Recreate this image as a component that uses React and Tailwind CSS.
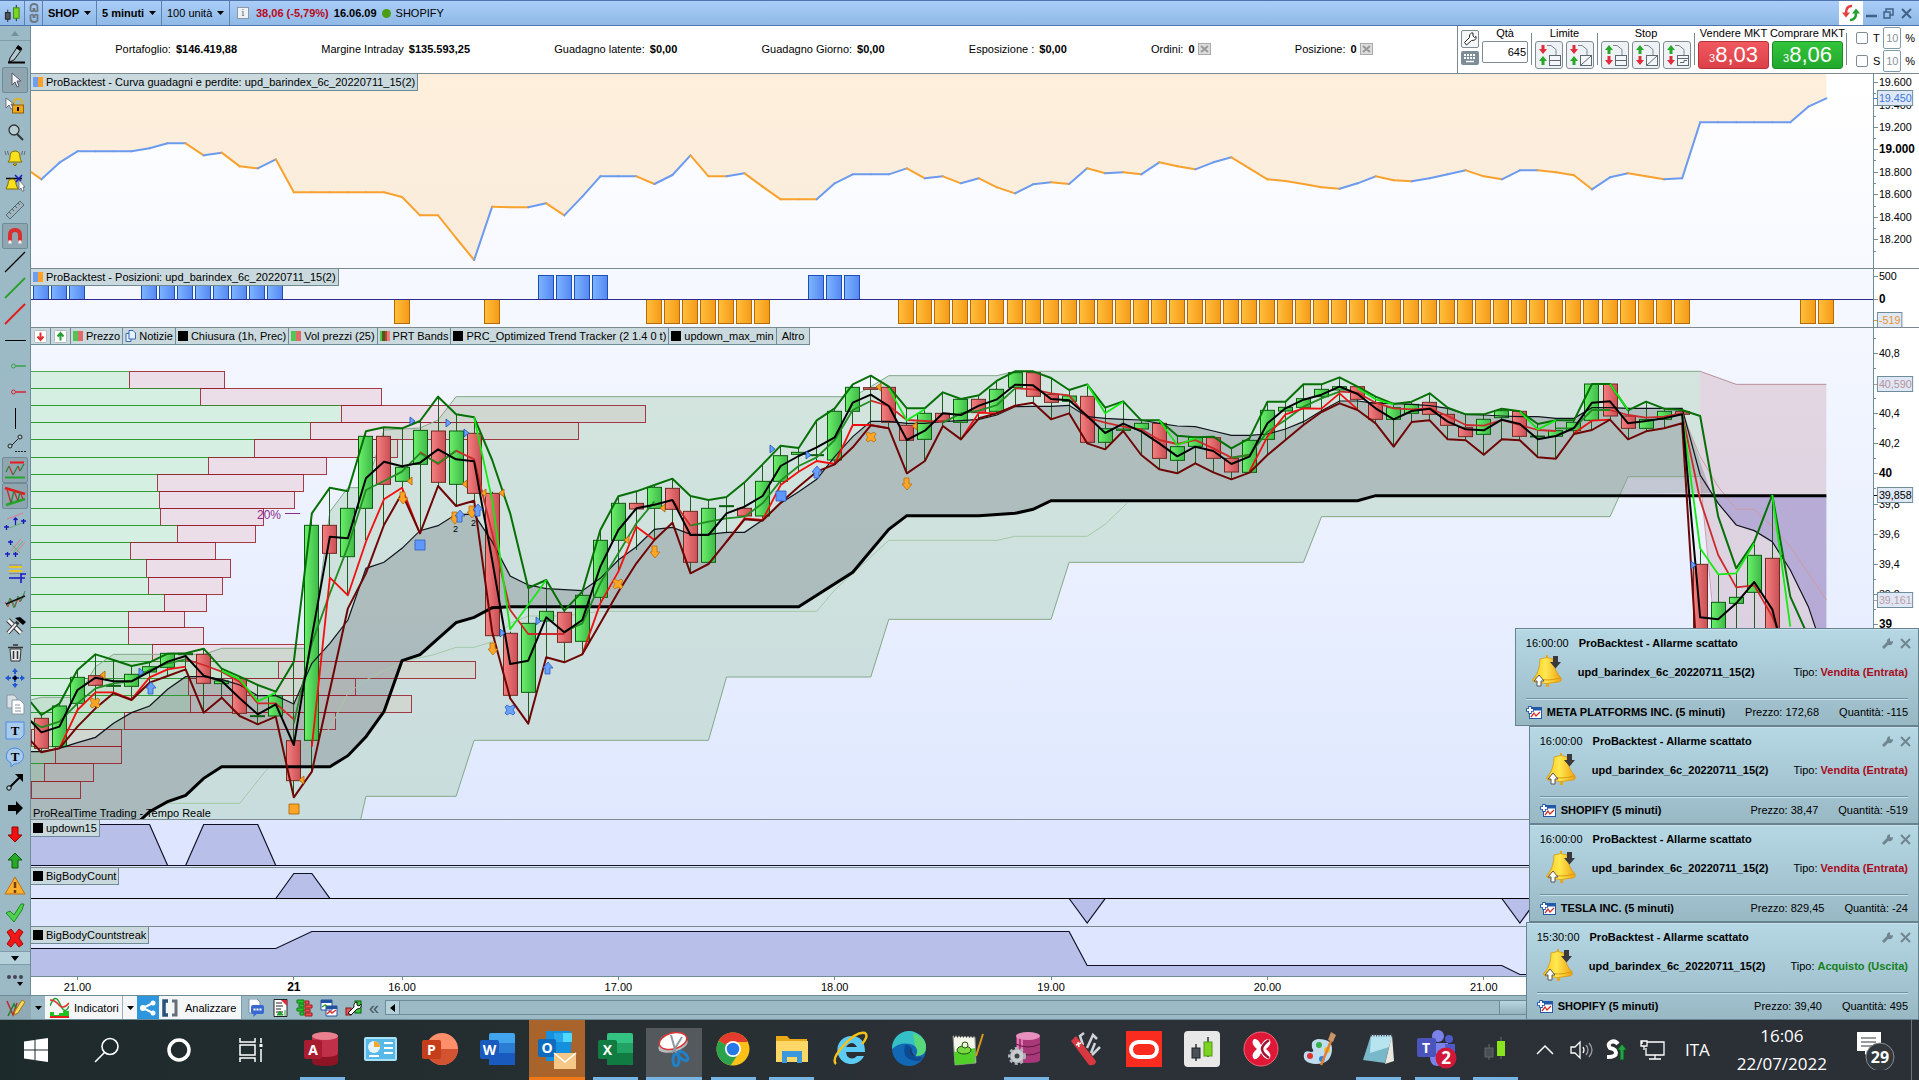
import React from 'react';

// Horizontal position of bar i, and vertical position of a price level
const bx = (i) => 41.4 + 18.03 * i;
const ly = (v) => 360 + v / 3;
const run = (start, values) => values.map((v, k) => `${bx(start + k)},${ly(v)}`).join(' ');
const pts = (pairs) => pairs.map(([i, v]) => `${bx(i)},${ly(v)}`).join(' ');

const EQUITY = [
    500, 538, 488, 454, 454, 454, 454, 445, 430, 430, 466, 458, 499, 505, 478, 577, 577, 577, 577, 577, 577, 591, 646, 646, 714,
    780, 620, 622, 622, 610, 646, 590, 529, 529, 529, 552, 525, 466, 529, 529, 520, 560, 598, 598, 598, 550, 523, 523, 523, 505,
    535, 529, 550, 535, 562, 580, 553, 547, 552, 505, 520, 517, 523, 487, 499, 508, 487, 472, 505, 538, 543, 552, 562, 566, 550,
    529, 541, 544, 535, 523, 511, 529, 538, 511, 511, 517, 526, 568, 532, 520, 529, 538, 535, 367, 367, 367, 367, 367, 367, 320, 295,
];

const LONG_BARS = [0, 1, 2, 6, 7, 8, 9, 10, 11, 12, 13, 28, 29, 30, 31, 43, 44, 45];
const SHORT_BARS = [20, 25, 34, 35, 36, 37, 38, 39, 40, ...Array.from({ length: 44 }, (_, k) => 48 + k), 98, 99];

// top, green end, red end
const PROFILE = [
    [34, 129, 224], [85, 200, 381], [136, 341, 645], [187, 310, 578], [238, 254, 397], [290, 208, 326], [341, 157, 303],
    [392, 159, 294], [443, 160, 263], [494, 177, 255], [545, 130, 215], [598, 146, 230], [650, 148, 222], [701, 164, 206],
    [752, 128, 184], [802, 128, 203], [853, 152, 309], [904, 278, 475], [955, 188, 355], [1006, 190, 411], [1057, 124, 335],
    [1108, 31, 121], [1159, 55, 121], [1210, 44, 93], [1264, 31, 80], [1315, 0, 0],
];

// index, body top, body bottom, high, low, rising
const CANDLES = [
    [0, 1075, 1165, 1065, 1177, 0], [1, 1038, 1160, 1031, 1165, 1], [2, 952, 1030, 930, 1050, 1], [3, 947, 976, 883, 1045, 0],
    [4, 976, 979, 900, 1000, 1], [5, 943, 979, 918, 1020, 1], [6, 920, 936, 907, 968, 1], [7, 880, 922, 880, 948, 1],
    [8, 880, 884, 880, 928, 1], [9, 883, 970, 866, 1058, 0], [10, 963, 971, 926, 1013, 1], [11, 955, 1060, 950, 1068, 0],
    [12, 1067, 1070, 975, 1093, 1], [13, 1007, 1068, 995, 1070, 1], [14, 1142, 1262, 905, 1312, 0], [15, 496, 1141, 460, 1235, 1],
    [16, 496, 580, 383, 653, 0], [17, 445, 590, 394, 706, 1], [18, 229, 445, 214, 540, 1], [19, 229, 373, 202, 495, 0],
    [20, 322, 364, 205, 400, 1], [21, 211, 313, 183, 520, 1], [22, 213, 367, 110, 378, 0], [23, 213, 373, 163, 438, 1],
    [24, 220, 400, 172, 422, 0], [25, 400, 827, 395, 830, 0], [26, 820, 1006, 815, 1015, 0], [27, 790, 997, 684, 1091, 1],
    [28, 754, 783, 660, 892, 1], [29, 757, 847, 752, 907, 0], [30, 706, 844, 695, 883, 1], [31, 541, 712, 510, 730, 1],
    [32, 430, 541, 409, 635, 1], [33, 430, 447, 394, 570, 0], [34, 382, 445, 375, 540, 1], [35, 385, 448, 356, 488, 0],
    [36, 454, 607, 408, 640, 0], [37, 445, 607, 420, 612, 1], [38, 437, 440, 411, 520, 1], [39, 445, 468, 367, 478, 0],
    [40, 364, 468, 313, 480, 1], [41, 287, 364, 257, 375, 1], [42, 277, 283, 264, 336, 1], [43, 284, 287, 181, 303, 1],
    [44, 154, 300, 145, 313, 1], [45, 82, 154, 73, 195, 1], [46, 83, 88, 47, 196, 0], [47, 82, 187, 80, 205, 0],
    [48, 196, 241, 145, 340, 0], [49, 160, 238, 145, 303, 1], [50, 160, 183, 97, 198, 0], [51, 118, 187, 117, 238, 1],
    [52, 118, 158, 106, 175, 0], [53, 88, 154, 62, 160, 1], [54, 38, 82, 34, 137, 1], [55, 38, 109, 34, 128, 0],
    [56, 103, 127, 54, 178, 0], [57, 108, 124, 90, 160, 1], [58, 109, 247, 73, 250, 0], [59, 206, 247, 143, 268, 1],
    [60, 207, 211, 124, 213, 1], [61, 190, 207, 181, 285, 1], [62, 190, 295, 181, 328, 0], [63, 260, 301, 227, 340, 1],
    [64, 232, 259, 230, 310, 1], [65, 233, 295, 230, 337, 0], [66, 295, 336, 265, 358, 0], [67, 241, 337, 235, 338, 1],
    [68, 151, 238, 125, 285, 1], [69, 142, 153, 125, 240, 1], [70, 116, 142, 73, 195, 1], [71, 88, 110, 73, 156, 1],
    [72, 80, 90, 52, 130, 1], [73, 80, 118, 78, 150, 0], [74, 128, 178, 110, 190, 0], [75, 143, 178, 132, 260, 1],
    [76, 133, 160, 125, 186, 1], [77, 127, 163, 100, 181, 0], [78, 163, 196, 143, 238, 0], [79, 202, 230, 163, 241, 0],
    [80, 178, 223, 163, 284, 1], [81, 152, 173, 146, 238, 1], [82, 154, 229, 154, 241, 0], [83, 228, 231, 192, 292, 1],
    [84, 212, 229, 181, 296, 1], [85, 187, 212, 181, 222, 1], [86, 72, 181, 72, 210, 1], [87, 72, 168, 72, 179, 0],
    [88, 168, 205, 151, 238, 0], [89, 178, 205, 125, 214, 1], [90, 154, 178, 146, 205, 1], [91, 155, 163, 150, 190, 0],
    [92, 613, 1300, 565, 1300, 0], [93, 727, 1300, 643, 1300, 1], [94, 712, 730, 640, 1300, 1], [95, 586, 697, 545, 1300, 1],
    [96, 595, 1300, 405, 1300, 0],
];

const HIGH_LINE = [
    1000, 1065, 1031, 930, 883, 900, 918, 907, 881, 880, 866, 926, 950, 975, 995, 905, 460, 383, 394, 214, 202, 205, 183, 110, 163,
    172, 300, 460, 684, 660, 752, 695, 510, 409, 394, 375, 356, 408, 420, 411, 367, 313, 257, 264, 181, 145, 73, 47, 80, 145, 145,
    97, 117, 106, 62, 34, 34, 54, 90, 73, 143, 124, 181, 181, 227, 232, 230, 265, 235, 125, 125, 73, 73, 52, 80, 110, 132, 125, 100,
    143, 163, 163, 146, 154, 192, 181, 181, 72, 72, 151, 125, 146, 150, 168, 470, 625, 545, 405, 710, 830,
];
const MID_LINE = [
    1060, 1117, 1100, 990, 953, 964, 964, 935, 905, 888, 947, 963, 1015, 1063, 1033, 1155, 830, 530, 535, 355, 305, 319, 308, 268,
    298, 304, 600, 912, 902, 772, 817, 780, 620, 510, 445, 434, 420, 525, 525, 460, 440, 408, 318, 288, 262, 232, 128, 104, 138, 240,
    212, 160, 165, 137, 118, 74, 76, 117, 121, 168, 219, 191, 214, 250, 289, 260, 273, 312, 290, 190, 145, 119, 104, 80, 102, 145,
    178, 153, 146, 185, 208, 211, 179, 192, 238, 228, 204, 128, 124, 190, 183, 175, 163, 772, 778, 730, 666, 748, 960,
];
const LOW_LINE = [
    1118, 1177, 1165, 1100, 1045, 1000, 1020, 968, 948, 928, 1058, 1013, 1068, 1093, 1070, 1312, 1235, 990, 745, 640, 495, 400, 520,
    378, 438, 422, 815, 1015, 1091, 892, 907, 883, 790, 695, 610, 540, 488, 640, 612, 545, 478, 482, 428, 380, 335, 313, 262, 196,
    205, 340, 303, 198, 238, 175, 160, 137, 128, 178, 160, 250, 268, 213, 285, 328, 340, 310, 337, 358, 338, 285, 240, 195, 156, 130,
    150, 190, 260, 186, 181, 238, 241, 284, 238, 241, 292, 296, 222, 210, 179, 238, 214, 205, 190, 1050,
];
const RED_RUNS = [
    [1, [1165, 1050, 997, 997, 1018, 952, 928, 920]], [15, [1160, 653, 706, 545, 418, 383, 522]], [30, [883, 730, 635, 500, 540]],
    [38, [545, 475, 480, 375, 335, 303, 312, 195, 195, 205]], [51, [238, 158, 160, 138]], [67, [335, 230, 163, 145, 146, 100, 148]],
    [85, [220, 182, 179]],
];
const CRIMSON_RUNS = [
    [8, [898, 915, 935, 965, 1030, 1030, 1078]], [21, [276, 312, 272, 298, 520, 750, 822, 822, 822]],
    [35, [420, 497]], [46, [122, 138, 180, 183, 185]], [54, [85, 88, 100, 106, 173, 188, 200, 208, 240, 252, 240, 265, 293, 285]],
    [72, [95, 98, 128, 145, 148, 145, 168, 195, 197, 180, 195, 210, 213]], [87, [150, 165, 173, 170, 160, 420, 585, 682, 676, 770, 900]],
];
const GREEN_RUNS = [
    [-1, [1070, 1102, 1085, 1030, 985, 970, 964, 930, 910, 898]], [14, [1090, 850, 700, 560, 390, 363, 335, 280, 310, 272]],
    [29, [815, 790, 670, 580, 490, 425]], [36, [497, 485, 475, 470, 430, 362, 318, 292, 240, 150, 123]], [50, [188, 160, 152, 135, 85]],
    [66, [293, 285, 215, 180, 140, 115, 95]], [84, [205, 205, 150, 150]],
];
const LIME_RUNS = [
    [10, [932, 958, 1024, 998]], [24, [172, 420, 808, 735, 660]], [47, [85, 181, 148]], [58, [73, 160, 125]], [62, [181, 255, 235]],
    [73, [85, 118, 133]], [82, [155, 208, 181]], [87, [72, 150]], [91, [160, 565, 643, 640, 550]], [96, [405, 800]],
];
const AVERAGE = [
    1175, 1175, 1165, 1148, 1132, 1090, 1058, 1038, 988, 950, 950, 958, 975, 1007, 1007, 1032, 910, 850, 780, 625, 607, 565, 512, 497,
    463, 463, 545, 648, 675, 686, 689, 692, 655, 600, 560, 508, 502, 523, 523, 517, 517, 480, 430, 395, 358, 290, 230, 184, 184, 190,
    190, 185, 182, 178, 165, 140, 139, 139, 136, 170, 175, 178, 180, 190, 198, 200, 213, 226, 226, 222, 207, 185, 152, 123, 123, 130,
    130, 133, 137, 145, 163, 165, 168, 170, 170, 175, 175, 143, 143, 145, 145, 145, 145, 345, 430, 495, 512, 545, 630, 740, 900,
];
const TREND = [
    [-1, 1620], [5.5, 1380], [6, 1355], [7, 1325], [8, 1306], [9, 1255], [10, 1220], [16, 1220], [17, 1187], [18, 1130], [19, 1055],
    [20, 902], [21, 884], [22, 836], [23, 788], [24, 772], [25, 743], [26, 740], [42, 740], [45, 637], [46, 572], [47, 508], [48, 467],
    [52, 467], [54, 460], [55, 448], [56, 422], [73, 422], [74, 407], [99, 407],
];
const UPPER = [
    [-1, 1025], [0, 1012], [2, 1012], [3, 920], [4, 883], [9, 883], [10, 865], [15, 865], [16, 455], [17, 383], [18, 383], [19, 210],
    [21, 204], [22, 180], [23, 110], [45, 110], [46, 80], [47, 47], [53, 47], [54, 34], [92, 34],
];
const LOWER = [
    [17.7, 1380], [18, 1309], [23, 1309], [24, 1141], [37, 1141], [38, 951], [46, 951], [47, 778], [56, 778], [57, 607], [70, 607],
    [71, 470], [87, 470], [88, 350], [92, 350],
];
const INNER = [
    [7, 1330], [11, 1330], [12.6, 1222], [13.6, 1180], [14.7, 1160], [16, 1105], [17, 1000], [18, 960], [20, 905], [21.7, 885],
    [23, 862], [24, 862], [25, 845], [26, 790], [27, 768], [29, 768], [31, 754], [43, 754], [44, 690], [47, 541], [53, 541], [54, 529],
    [58, 529], [59, 493], [60.2, 430],
];

const MARKERS = [
    ['play', 412, 421], ['play', 448, 423], ['play', 466, 433], ['play', 141, 672], ['play', 538, 621], ['play', 502, 633],
    ['play', 772, 449], ['play', 808, 455], ['play', 1693, 565], ['back', 410, 481], ['back', 465, 484], ['back', 484, 493],
    ['back', 502, 493], ['back', 103, 675], ['back', 302, 780], ['back', 627, 540], ['back', 663, 508], ['back', 879, 387],
    ['back', 915, 426], ['down', 402, 498], ['down', 454, 518], ['down', 471, 512], ['down', 492, 649], ['down', 654, 552],
    ['down', 906, 484], ['up', 150, 688], ['up', 459, 516], ['up', 477, 510], ['up', 547, 668], ['up', 816, 472],
    ['cross', 95, 703], ['cross', 618, 584], ['cross', 871, 437], ['crossBlue', 510, 710], ['box', 420, 545], ['box', 781, 496],
    ['boxOrange', 294, 809],
];
const MARKER_SHAPES = {
    play: ['M-2 -4 L3 0 L-2 4z', '#6aa0ff', '#1c50b0'],
    back: ['M2 -4 L-3 0 L2 4z', '#ffa526', '#a86008'],
    down: ['M-2 -6h5v6h3l-5 6 -5 -6h2z', '#ffa526', '#b87010'],
    up: ['M-2 6h5v-6h3l-5 -6 -5 6h2z', '#6aa0ff', '#2a5cc0'],
    cross: ['M-5 -3l2 -2 3 2 3 -2 2 2 -2 3 2 3 -2 2 -3 -2 -3 2 -2 -2 2 -3z', '#ffa526', '#b87010'],
    crossBlue: ['M-5 -3l2 -2 3 2 3 -2 2 2 -2 3 2 3 -2 2 -3 -2 -3 2 -2 -2 2 -3z', '#6aa0ff', '#2a5cc0'],
    box: ['M-5 -5h10v10h-10z', '#5e98ff', '#2a5cc0'],
    boxOrange: ['M-5 -5h10v10h-10z', '#ffa526', '#a86008'],
};

/* ---------- charts ---------- */

const Chart = ({ top, height, children }) => (
    <svg viewBox={`31 ${top} 1842 ${height}`} preserveAspectRatio="none" className="block h-full min-w-0 flex-1">{children}</svg>
);

// label: [text, y, bold]; badge: [text, y, colour, width]
const Axis = ({ top, height, labels = [], badges = [], ticks = [] }) => (
    <svg viewBox={`0 ${top} 46 ${height}`} preserveAspectRatio="none" className="block h-full w-[46px] shrink-0 border-l border-[#6f8b98] bg-white" fontFamily="Liberation Sans, Arial, sans-serif">
        {ticks.map((y) => <path key={y} d={`M0 ${y + 0.5}h2`} stroke="#6f8b98" />)}
        {labels.map(([text, y, bold]) => (
            <g key={text}>
                <path d={`M0 ${y + 0.5}h4`} stroke="#6f8b98" />
                <text x="5" y={y + 4} fontSize={bold ? 12 : 11} fontWeight={bold ? 700 : 400}>{text}</text>
            </g>
        ))}
        {badges.map(([text, y, color, width]) => (
            <g key={text}>
                <path d={`M0 ${y + 0.5}h4`} stroke={color} />
                <rect x="3.5" y={y - 7.5} width={width} height="15" fill="#dfe8f6" stroke="#6f8b98" />
                <text x="5" y={y + 4} fontSize="11" fill={color}>{text}</text>
            </g>
        ))}
    </svg>
);

const Swatch = ({ kind }) => {
    if (kind === 'equity') return <span className="flex h-[10px] w-[10px]"><i className="flex-1 bg-[#6f9df0]" /><i className="flex-1 bg-[#ffa126]" /></span>;
    if (kind === 'price') return <span className="flex h-[10px] w-[10px]"><i className="flex-1 bg-[#55c455]" /><i className="flex-1 bg-[#e06a6a]" /></span>;
    if (kind === 'bands') return <span className="flex h-[10px] w-[10px]"><i className="flex-1 bg-[#55c455]" /><i className="flex-1 bg-[#4c5a18]" /><i className="flex-1 bg-[#b0442c]" /><i className="flex-1 bg-[#e08080]" /></span>;
    return <span className="h-[10px] w-[10px] bg-black" />;
};

const Chip = ({ kind, children }) => (
    <button type="button" className="flex h-[17px] items-center gap-[3px] border-r border-b border-[#6f8b98] bg-[#cad9dd] px-[2px] whitespace-nowrap">
        {kind && <Swatch kind={kind} />}
        {children}
    </button>
);

const EquityPane = () => {
    const y = (v) => v / 3;
    let last = '#ffa12e';
    const segments = EQUITY.slice(1).map((v, k) => {
        if (v < EQUITY[k]) last = '#6c9bee';
        if (v > EQUITY[k]) last = '#f7a22f';
        return <path key={k} d={`M${bx(k - 1)} ${y(EQUITY[k])}L${bx(k)} ${y(v)}`} stroke={last} strokeWidth="2" strokeLinecap="round" />;
    });
    return (
        <section className="relative flex h-[195px] shrink-0 border-t border-[#7b8a90] bg-gradient-to-b from-white to-[#f7f9ff]">
            <Chart top={74} height={194}>
                <defs><linearGradient id="cream" x1="0" y1="0" x2="0" y2="1"><stop offset="0" stopColor="#ffefdc" /><stop offset="1" stopColor="#f8ecdc" /></linearGradient></defs>
                <polygon points={`23,70 ${EQUITY.map((v, k) => `${bx(k - 1)},${y(v)}`).join(' ')} ${bx(99)},70`} fill="url(#cream)" />
                {segments}
            </Chart>
            <Axis
                top={74} height={194} ticks={[93, 116, 138, 160, 183, 206, 228, 251]}
                labels={[['19.600', 82], ['19.400', 105], ['19.200', 127], ['19.000', 149, true], ['18.800', 172], ['18.600', 194], ['18.400', 217], ['18.200', 239]]}
                badges={[['19.450', 98, '#3d78d8', 36]]}
            />
            <div className="absolute top-0 left-0"><Chip kind="equity">ProBacktest - Curva guadagni e perdite: upd_barindex_6c_20220711_15(2)</Chip></div>
        </section>
    );
};

const PositionsPane = () => (
    <section className="relative flex h-[59px] shrink-0 border-t border-[#7b8a90] bg-[#f5f8ff]">
        <Chart top={269} height={58}>
            <defs>
                <linearGradient id="long"><stop offset="0" stopColor="#7db5ff" /><stop offset="1" stopColor="#5588f2" /></linearGradient>
                <linearGradient id="short"><stop offset="0" stopColor="#ffc03c" /><stop offset="1" stopColor="#f59a18" /></linearGradient>
            </defs>
            {LONG_BARS.map((i) => <rect key={i} x={Math.floor(bx(i)) - 7.5} y="275.5" width="15" height="24" fill="url(#long)" stroke="#1d4fb4" />)}
            {SHORT_BARS.map((i) => <rect key={i} x={Math.floor(bx(i)) - 7.5} y="299.5" width="15" height="24" fill="url(#short)" stroke="#b56a08" />)}
            <path d="M31 299.5H1873" stroke="#2a2a90" />
        </Chart>
        <Axis top={269} height={58} labels={[['500', 276], ['0', 299, true]]} badges={[['-519', 320, '#e8942a', 25]]} />
        <div className="absolute top-0 left-0"><Chip kind="equity">ProBacktest - Posizioni: upd_barindex_6c_20220711_15(2)</Chip></div>
    </section>
);

const Runs = ({ runs, color, width }) => runs.map(([start, values]) => (
    <polyline key={start} points={run(start, values)} fill="none" stroke={color} strokeWidth={width} strokeLinejoin="round" />
));

const profileRows = PROFILE.slice(0, -1).map(([top, green, red], k) => {
    const y = Math.round(ly(top)) + 0.5;
    return { y, green, red, h: Math.round(ly(PROFILE[k + 1][0])) + 0.5 - y };
});

const PricePane = () => (
    <section className="relative flex min-h-0 flex-1 border-t border-[#7b8a90] bg-gradient-to-b from-[#f4f7ff] to-[#dfe8fe]">
        <Chart top={328} height={491}>
            <defs>
                <linearGradient id="up"><stop offset="0" stopColor="#6af06a" /><stop offset="1" stopColor="#3fb949" /></linearGradient>
                <linearGradient id="dn"><stop offset="0" stopColor="#f58080" /><stop offset="1" stopColor="#c94f55" /></linearGradient>
            </defs>
            {profileRows.map(({ y, green, red, h }) => (
                <g key={y}>
                    <rect x="31" y={y} width={green - 31} height={h} fill="#d6efe3" />
                    <rect x={green + 0.5} y={y} width={red - green} height={h} fill="#ecdee8" />
                </g>
            ))}
            <polygon points={`${pts(UPPER)} ${pts([...LOWER].reverse())} 23,830`} fill="#a9cdb0" fillOpacity=".42" />
            <polygon points={`${bx(92)},${ly(34)} ${bx(94)},${ly(73)} ${bx(99)},${ly(73)} ${bx(99)},830 ${bx(94)},830 ${bx(92)},${ly(350)}`} fill="#c8a4b0" fillOpacity=".38" />
            <polygon points={`${run(-1, AVERAGE.slice(0, 93))} ${bx(92.6)},${ly(400)} ${pts([...TREND].filter(([i]) => i < 92).reverse())}`} fill="#606870" fillOpacity=".3" />
            <polygon points={`${bx(92.7)},${ly(407)} ${run(93, AVERAGE.slice(94))} ${bx(99)},${ly(407)}`} fill="#6c62c0" fillOpacity=".34" />
            {profileRows.map(({ y, green, red, h }) => (
                <g key={y}>
                    <path d={`M31 ${y}H${green}M31 ${y + h}H${green}`} stroke="#2a962a" strokeOpacity=".8" />
                    <rect x={green + 0.5} y={y} width={red - green} height={h} fill="none" stroke="#961c2c" strokeOpacity=".85" />
                </g>
            ))}
            <polyline points={pts(UPPER)} fill="none" stroke="#84a889" />
            <polyline points={pts(LOWER)} fill="none" stroke="#84a889" />
            <polyline points={pts(INNER)} fill="none" stroke="#a5c8a9" />
            <polyline points={pts([[92, 34], [94, 73], [99, 73]])} fill="none" stroke="#b8909a" />
            <polyline points={pts([[91, 160], [92, 290], [93, 380], [94, 448], [95, 448], [96, 500], [97, 560], [99, 720]])} fill="none" stroke="#cc9ca4" />
            <polyline points={pts([[92, 350], [92.8, 805]])} fill="none" stroke="#cc9ca4" />
            {CANDLES.map(([i, top, bottom, high, low, rising]) => {
                const x = Math.floor(bx(i));
                return (
                    <g key={i} stroke={rising ? '#0c5c10' : '#6c2c20'}>
                        <path d={`M${x + 0.5} ${ly(high)}V${ly(low)}`} stroke="#1f5c1f" />
                        <rect x={x - 6.5} y={ly(top)} width="14" height={(bottom - top) / 3} fill={rising ? 'url(#up)' : 'url(#dn)'} />
                    </g>
                );
            })}
            <polyline points={run(-1, AVERAGE)} fill="none" stroke="#10141c" strokeWidth="1.2" />
            <polyline points={pts(TREND)} fill="none" stroke="#000" strokeWidth="3" />
            <Runs runs={CRIMSON_RUNS} color="#cc2a2a" width="1.8" />
            <Runs runs={GREEN_RUNS} color="#228b22" width="1.8" />
            <Runs runs={RED_RUNS} color="#f01010" width="1.8" />
            <Runs runs={[[-1, LOW_LINE]]} color="#6e0606" width="2" />
            <Runs runs={[[-1, HIGH_LINE]]} color="#067006" width="2" />
            <Runs runs={LIME_RUNS} color="#12ea12" width="1.8" />
            <Runs runs={[[-1, MID_LINE]]} color="#000" width="2" />
            {MARKERS.map(([kind, x, y]) => (
                <path key={`${x}-${y}`} d={MARKER_SHAPES[kind][0]} transform={`translate(${x} ${y})`} fill={MARKER_SHAPES[kind][1]} stroke={MARKER_SHAPES[kind][2]} strokeWidth=".8" />
            ))}
            <g fontFamily="Liberation Sans, Arial, sans-serif">
                <text x="257" y="519" fontSize="12" fill="#8d2b8d">20%</text>
                <path d="M285 513.5h15" stroke="#8d2b8d" />
                <text x="453" y="532" fontSize="9">2</text>
                <text x="471" y="526" fontSize="9">2</text>
                <text x="33" y="817" fontSize="11">ProRealTime Trading - Tempo Reale</text>
            </g>
        </Chart>
        <Axis
            top={328} height={491} ticks={[338, 368, 398, 428, 458, 488, 519, 549, 579, 609]}
            labels={[['40,8', 353], ['40,4', 413], ['40,2', 443], ['40', 473, true], ['39,8', 504], ['39,6', 534], ['39,4', 564], ['39,2', 594], ['39', 624, true]]}
            badges={[['40,590', 384, '#b89098', 36], ['39,858', 495, '#000', 36], ['39,161', 600, '#c09aa2', 36]]}
        />
        <div className="absolute top-0 left-0 flex">
            <Chip><ArrowBox color="#e03030" down /></Chip>
            <Chip><ArrowBox color="#28a030" /></Chip>
            <Chip kind="price">Prezzo</Chip>
            <Chip><svg width="11" height="12" viewBox="0 0 11 12" fill="#e8f0ff" stroke="#3868b8"><path d="M1 3.5h5v8H1z" /><path d="M4 .5h4l2.500 2.500v6H4z" /></svg>Notizie</Chip>
            <Chip kind="black">Chiusura (1h, Prec)</Chip>
            <Chip kind="price">Vol prezzi (25)</Chip>
            <Chip kind="bands">PRT Bands</Chip>
            <Chip kind="black">PRC_Optimized Trend Tracker (2 1.4 0 t)</Chip>
            <Chip kind="black">updown_max_min</Chip>
            <Chip><span className="px-[3px]">Altro</span></Chip>
        </div>
    </section>
);

const ArrowBox = ({ color, down }) => (
    <svg width="15" height="13" viewBox="0 0 15 13">
        <rect x="1.5" y=".5" width="12" height="12" rx="1" fill="#fff" stroke="#b4bcc4" />
        <path d={down ? 'M7.500 2.500v7M4.500 6.500l3 3.500 3-3.500' : 'M7.500 10.500v-7M4.500 6.500l3-3.500 3 3.500'} fill="none" stroke={color} strokeWidth="2" />
    </svg>
);

const SmallPane = ({ label, top, height, className, children }) => (
    <section className={`relative flex shrink-0 border-t border-[#7b8a90] bg-[#dde6fe] ${className}`}>
        <Chart top={top} height={height}>{children}</Chart>
        <Axis top={top} height={height} />
        <div className="absolute top-0 left-0"><Chip kind="black">{label}</Chip></div>
    </section>
);

const LOWER_FILL = { fill: '#b8c0ea', stroke: '#101024', strokeWidth: 1.2 };

const TIMES = [['21.00', 2], ['21', 14, true], ['16.00', 20], ['17.00', 32], ['18.00', 44], ['19.00', 56], ['20.00', 68], ['21.00', 80]];

const TimeAxis = () => (
    <svg viewBox="31 977 1888 18" preserveAspectRatio="none" className="block h-[19px] w-full shrink-0 border-t border-[#6f8b98] bg-white" fontFamily="Liberation Sans, Arial, sans-serif">
        {TIMES.map(([text, i, bold]) => (
            <g key={i}>
                <path d={`M${Math.floor(bx(i)) + 0.5} 977v3`} stroke="#6f8b98" />
                <text x={bx(i)} y="991" textAnchor="middle" fontSize={bold ? 12 : 11} fontWeight={bold ? 700 : 400}>{text}</text>
            </g>
        ))}
    </svg>
);

/* ---------- top bars ---------- */

const CandlesIcon = ({ size = 20 }) => (
    <svg width={size} height={size} viewBox="0 0 20 20">
        <path d="M5 6v13M14 1v17" stroke="#222" />
        <rect x="2.500" y="9" width="5" height="7" fill="#4c5458" stroke="#222" />
        <rect x="11" y="4" width="6" height="11" fill="#7ed321" stroke="#3b8a10" />
    </svg>
);

const Caret = () => <svg width="7" height="4" viewBox="0 0 7 4" className="pointer-events-none shrink-0"><path d="M0 0h7L3.500 4z" /></svg>;

const BarSelect = ({ label, value, bold }) => (
    <label className="flex h-full items-center gap-[4px] border-l border-[#5c82b0] px-[5px]">
        <select aria-label={label} defaultValue={value} className={`appearance-none bg-transparent outline-none ${bold ? 'font-bold' : ''}`}>
            <option>{value}</option>
        </select>
        <Caret />
    </label>
);

const TitleBar = () => (
    <header className="flex h-[26px] shrink-0 items-center border-y border-[#4d75ab] bg-gradient-to-b from-[#abcdf8] to-[#8fb9e6]">
        <span className="flex w-[24px] justify-center"><CandlesIcon size={19} /></span>
        <span className="flex h-full w-[18px] items-center justify-center border-l border-[#5c82b0]">
            <svg width="10" height="20" viewBox="0 0 10 20" fill="none" stroke="#6c7880" strokeWidth="1.800"><path d="M1.500 8V4q0-3 3.500-3t3.500 3v4q-3 1-3-1V5M1.500 8q3 1 3-1V5M1.500 12v4q0 3 3.500 3t3.500-3v-4q-3-1-3 1v2M1.500 12q3-1 3 1v2" /></svg>
        </span>
        <BarSelect label="Titolo" value="SHOP" bold />
        <BarSelect label="Intervallo" value="5 minuti" bold />
        <BarSelect label="Unità" value="100 unità" />
        <span className="flex h-full items-center gap-[5px] border-l border-[#5c82b0] pl-[7px]">
            <span className="mr-[2px] flex h-[12px] w-[12px] items-center justify-center border border-[#8c98a4] bg-[#eef2f6] font-serif text-[10px] leading-none text-[#666677]">i</span>
            <b className="text-[#b80820]">38,06 (-5,79%)</b>
            <b>16.06.09</b>
            <span className="h-[9px] w-[9px] rounded-full bg-[#4c9c14]" />
            SHOPIFY
        </span>
        <span className="ml-auto flex h-full items-center">
            <button type="button" aria-label="Aggiorna" className="flex h-[24px] w-[24px] items-center justify-center bg-white">
                <svg width="18" height="18" viewBox="0 0 18 18" fill="none" strokeWidth="2.500"><path d="M10 2Q4 2 4 9" stroke="#e04040" /><path d="M0 8.500h8l-4 5z" fill="#e04040" /><path d="M8 16q6 0 6-7" stroke="#22a030" /><path d="M10 9.500h8l-4-5z" fill="#22a030" /></svg>
            </button>
            <button type="button" aria-label="Riduci" className="px-[3px] pt-[6px]"><svg width="11" height="4"><path d="M0 2h11" stroke="#3f6288" strokeWidth="2.500" /></svg></button>
            <button type="button" aria-label="Ripristina" className="px-[3px]"><svg width="11" height="11" fill="none" stroke="#3f6288" strokeWidth="1.500"><path d="M3 4V1h7v6H7M1 4h6v6H1z" /></svg></button>
            <button type="button" aria-label="Chiudi" className="pr-[7px] pl-[4px]"><svg width="11" height="11" stroke="#3f6288" strokeWidth="2"><path d="M1 1l9 9M10 1l-9 9" /></svg></button>
        </span>
    </header>
);

const Stat = ({ label, value, cancel }) => (
    <span className="flex items-center gap-[5px] whitespace-nowrap">
        {label} <b>{value}</b>
        {cancel && <button type="button" aria-label="Annulla" className="-ml-[2px]"><svg width="13" height="12" viewBox="0 0 13 12"><rect x=".5" y=".5" width="12" height="11" fill="#dcdcdc" stroke="#aaa" /><path d="M3 3l7 6M10 3l-7 6" stroke="#999" strokeWidth="2" /></svg></button>}
    </span>
);

const OrderButton = ({ label, flip, mark }) => (
    <button type="button" aria-label={label} className="flex h-[28px] w-[28px] items-center justify-center rounded-[3px] border border-[#7f8c94] bg-[#eef2f5]">
        <svg width="24" height="24" viewBox="0 0 24 24">
            <path d="M10 2.500h4l5 4v6" fill="none" stroke="#7b8890" />
            <path d="M4.500 2h3v4h2.500l-4 5-4-5h2.500z" fill={flip ? '#28a828' : '#e02c3c'} transform={flip ? 'rotate(180 6 6.500)' : undefined} />
            <path d="M4.500 22h3v-4h2.500l-4-5-4 5h2.500z" fill={flip ? '#e02c3c' : '#28a828'} transform={flip ? 'rotate(180 6 17.500)' : undefined} />
            <rect x="12.500" y="12.500" width="11" height="10" fill="#f4f6f8" stroke="#5d6a74" />
            <path d={mark} stroke="#5d6a74" fill="none" />
        </svg>
    </button>
);

const Divider = () => <span className="mt-[7px] h-[32px] w-px bg-[#7b8a90]" />;

const PercentRow = ({ name }) => (
    <div className="flex h-[22px] items-center">
        <label className="flex items-center gap-[5px]"><input type="checkbox" className="h-[12px] w-[12px] appearance-none rounded-[2px] border border-[#7f8c94] bg-white" />{name}</label>
        <label className="ml-auto flex items-center gap-[4px]"><input type="text" aria-label={`${name} percentuale`} defaultValue="10" className="h-[22px] w-[18px] rounded-[2px] border border-[#7f9cab] pl-[2px] text-[#8a9298]" />%</label>
    </div>
);

const AccountBar = () => (
    <div className="flex h-[47px] shrink-0 bg-white">
        <div className="flex flex-1 items-center justify-evenly pb-[2px]">
            <Stat label="Portafoglio:" value="$146.419,88" />
            <Stat label="Margine Intraday" value="$135.593,25" />
            <Stat label="Guadagno latente:" value="$0,00" />
            <Stat label="Guadagno Giorno:" value="$0,00" />
            <Stat label="Esposizione :" value="$0,00" />
            <Stat label="Ordini:" value="0" cancel />
            <Stat label="Posizione:" value="0" cancel />
        </div>
        <div className="flex w-[462px] gap-[3px] border-l border-[#7b8a90] pl-[3px]">
            <div className="flex flex-col gap-[3px] pt-[4px]">
                <button type="button" aria-label="Impostazioni" className="flex h-[18px] w-[18px] items-center justify-center rounded-[2px] border border-[#7f8c94] bg-[#f4f6f8]">
                    <svg width="14" height="14" viewBox="0 0 14 14" fill="#fff" stroke="#222"><path d="M1.500 10.500l5-5q-1-3 2-4.500h1.500v3l1.500 1.500 1.500-1q1 4-4.500 4l-5 4.500z" /></svg>
                </button>
                <button type="button" aria-label="Tastiera" className="flex h-[14px] w-[18px] items-center justify-center rounded-[2px] bg-[#7d8d98]">
                    <svg width="14" height="10" viewBox="0 0 14 10" stroke="#fff"><path d="M1 2h12M1 5h12" strokeDasharray="2 1" strokeWidth="2" /><path d="M3 8.500h8" strokeWidth="1.500" /></svg>
                </button>
            </div>
            <label className="flex flex-col items-center leading-[15px]">Qtà<input type="text" defaultValue="645" className="h-[22px] w-[46px] rounded-[2px] border border-[#7f8c94] px-[1px] text-right" /></label>
            <Divider />
            <div className="flex flex-col items-center leading-[15px]">Limite
                <div className="flex gap-[3px]">
                    <OrderButton label="Limite acquisto" mark="M13 17.500h10" />
                    <OrderButton label="Limite obliquo" mark="M13 22l10-9" />
                </div>
            </div>
            <Divider />
            <div className="flex flex-col items-center leading-[15px]">Stop
                <div className="flex gap-[3px]">
                    <OrderButton label="Stop" flip mark="M13 17.500h10" />
                    <OrderButton label="Stop obliquo" flip mark="M13 22l10-9" />
                    <OrderButton label="Stop dinamico" flip mark="M13 15.500h10M15 19.500h4v-2h3" />
                </div>
            </div>
            <Divider />
            <div className="flex w-[71px] flex-col items-center leading-[15px] whitespace-nowrap">Vendere MKT
                <button type="button" className="h-[28px] w-full rounded-[3px] border border-[#b83038] bg-gradient-to-b from-[#f05860] to-[#dc4048] text-[22px] leading-none text-white"><span className="text-[11px]">3</span>8,03</button>
            </div>
            <div className="flex w-[71px] flex-col items-center leading-[15px] whitespace-nowrap">Comprare MKT
                <button type="button" className="h-[28px] w-full rounded-[3px] border border-[#1c8c24] bg-gradient-to-b from-[#34c43c] to-[#20a82c] text-[22px] leading-none text-white"><span className="text-[11px]">3</span>8,06</button>
            </div>
            <Divider />
            <div className="flex flex-1 flex-col gap-[1px] pt-[1px] pr-[4px] pl-[6px]">
                <PercentRow name="T" />
                <PercentRow name="S" />
            </div>
        </div>
    </div>
);

/* ---------- left tools ---------- */

const BELL = 'M10 3q5 0 5 6 0 3 2 5H3q2-2 2-5 0-6 5-6z';
const TOOLS = [
    ['Matita', <><path d="M5 14L13 2l4 3-8 11-5 2z" fill="#b4c8d0" stroke="#111" /><path d="M11 4l4 3 2-3-4-3z" /><path d="M3 18.500h17" stroke="#000" strokeWidth="2" /></>],
    ['Puntatore', <path d="M7 3v12l3-3 2 5 2-1-2-5h4z" fill="#f4f6f8" stroke="#556" />, true],
    ['Blocca', <><path d="M9 9V6q0-3 4-3t4 3v3" fill="none" stroke="#d8b430" strokeWidth="2" /><rect x="7.500" y="9" width="11" height="8" fill="#f0a818" stroke="#90600c" /><path d="M13 11v4" stroke="#000" strokeWidth="2" /><path d="M1 2v10l3-3 2 4 2-1-2-4h3z" fill="#fff" stroke="#556" strokeWidth=".8" /></>],
    ['Zoom', <><circle cx="9" cy="8" r="5" fill="#b8ccd4" stroke="#333" strokeWidth="1.300" /><path d="M12 12l6 6" stroke="#333" strokeWidth="2" /></>],
    ['Allarme', <><path d={BELL} fill="#f8e01c" stroke="#806a00" /><path d="M8 16h4l-2 2z" fill="#f8e01c" stroke="#806a00" /><path d="M2.500 3l1 4M17.500 3l-1 4M0 3l1 4M20 3l-1 4" stroke="#555" strokeWidth=".8" /></>],
    ['Allarme prezzo', <><path d="M1 4.500h16" stroke="#000" strokeWidth="1.500" /><path d="M7 5q4 0 4 5l2 5H1l2-5q0-5 4-5z" fill="#f8e01c" stroke="#806a00" /><path d="M10 1l6 6M17 1l-6 7" stroke="#1818c0" strokeWidth="1.500" /><path d="M14 6v10l2-2 1 3h2l-1-4h2z" fill="#fff" stroke="#556" strokeWidth=".7" /></>],
    ['Righello', <path d="M1 15L15 1l4 4L5 19zM4 12l2 2M7 9l2 2M10 6l2 2M13 3l2 2" fill="#9fb4bd" stroke="#566872" />],
    ['Calamita', <><path d="M5 16V9q0-5 5-5t5 5v7" fill="none" stroke="#d83030" strokeWidth="4" /><path d="M5 14.500v3M15 14.500v3" stroke="#fff" strokeWidth="3" /></>, true],
    ['Linea', <path d="M0 20L20 0" stroke="#000" strokeWidth="1.300" />],
    ['Linea verde', <path d="M0 20L20 0" stroke="#28a028" strokeWidth="1.800" />],
    ['Linea rossa', <path d="M0 20L20 0" stroke="#e01818" strokeWidth="1.800" />],
    ['Orizzontale', <path d="M0 10.500h21" stroke="#000" />],
    ['Semiretta verde', <><circle cx="8.500" cy="10" r="2" fill="none" stroke="#38a048" /><path d="M11 10h10" stroke="#38a048" strokeWidth="1.500" /></>],
    ['Semiretta rossa', <><circle cx="8.500" cy="10" r="2" fill="none" stroke="#d82030" /><path d="M11 10h10" stroke="#d82030" strokeWidth="1.500" /></>],
    ['Verticale', <path d="M10.500 0v21" stroke="#000" />],
    ['Segmento', <><path d="M7 11L13 5" stroke="#222" /><circle cx="5" cy="12" r="2" fill="#b8ccd4" stroke="#222" /><circle cx="15" cy="3" r="2" fill="#b8ccd4" stroke="#222" /><path d="M10 17.500h11" stroke="#222" strokeDasharray="2 1" /></>],
    ['Supporti', <><path d="M5 2.500h14" stroke="#e81818" strokeWidth="2" /><path d="M0 17.500h20" stroke="#20a828" strokeWidth="2" /><path d="M4 6l4 9M13 6l2 5" stroke="#c03028" strokeWidth="1.200" /><path d="M1 12l3-6M8 15l5-9M15 11l4-7" stroke="#208838" strokeWidth="1.200" /></>, true],
    ['Triangoli', <><path d="M0 2l20 6" stroke="#e81818" strokeWidth="2.500" /><path d="M1 19l19-6" stroke="#20a828" strokeWidth="2.500" /><path d="M2 3l4 14M9 5l4 10M15 6l3 7" stroke="#c03028" strokeWidth="1.300" /><path d="M6 17l3-12M13 15l2-9" stroke="#208838" strokeWidth="1.300" /></>, true],
    ['Canale', <><path d="M2 7l16-6" stroke="#e07890" /><path d="M4 16l16-6" stroke="#60b070" /><path d="M-1 15h5M1.500 13v5M16 9h5M18.500 7v5M10.500 13V6M8.500 8l2-2 2 2" stroke="#1818c0" strokeWidth="1.300" fill="none" /></>],
    ['Forchetta', <><path d="M6 13L16 1M10 16L20 4" stroke="#e07890" /><path d="M5 5l10 10M8 15L18 3" stroke="#60b070" /><path d="M3 4h5M5.500 2v5M0 16h5M2.500 14v5M8 16h5M10.500 14v5" stroke="#1818c0" strokeWidth="1.300" /></>],
    ['Fibonacci', <><path d="M4 3h13M4 7h13" stroke="#e8c820" strokeWidth="2" /><path d="M4 1h13M4 9.500h13" stroke="#888" /><path d="M4 14h11M16 19v-9h5M16 14h4" stroke="#1818c0" strokeWidth="1.600" fill="none" /></>],
    ['Regressione', <><path d="M0 12l3 5 3-8 4 8 3-9 2 4 4-8" fill="none" stroke="#c04040" /><path d="M2 16l3-8 4 10 4-12 3 5 4-10" fill="none" stroke="#309040" /><path d="M1 14L20 6" stroke="#111" strokeWidth="1.500" /></>],
    ['Strumenti', <><path d="M3 4l13 13" stroke="#333" strokeWidth="5" /><path d="M3 4l13 13" stroke="#f4f4f4" strokeWidth="3" /><path d="M3 17L13 6" stroke="#333" strokeWidth="4" /><path d="M3 17L11 8" stroke="#f4f4f4" strokeWidth="2" /><path d="M10 2l8 7 3-3-6-5z" /></>],
    ['Cestino', <><path d="M5 7h11l-1 12H6z" fill="#e4e8ea" stroke="#333" /><path d="M3 5.500h15M8 3h5M8.500 9v8M12.500 9v8" stroke="#333" strokeWidth="1.500" /></>],
    ['Sposta', <><path d="M10 0l3 4H7zM10 20l3-4H7zM0 10l4-3v6zM20 10l-4-3v6z" fill="#2458d0" /><path d="M10 3v14M3 10h14" stroke="#2458d0" strokeWidth="2" strokeDasharray="3 1" /><circle cx="10" cy="10" r="2" /></>],
    ['Copia', <><path d="M2 1h7l3 3v10H2z" fill="#d8e0e4" stroke="#8896a0" /><path d="M7 6h8l4 4v10H7z" fill="#fff" stroke="#8896a0" /><path d="M10 11h5M10 14h6M10 17h6" stroke="#8896a0" /></>],
    ['Testo', <><path d="M1 2h18v13l-4 4H1z" fill="#a9cbea" stroke="#4c88e8" /><text x="10" y="15" textAnchor="middle" fontSize="13" fontWeight="700" fontFamily="Liberation Serif, serif">T</text></>],
    ['Nota', <><path d="M10 2a9 8 0 1 1-1 16l-3 3v-4a9 8 0 0 1 4-15z" fill="#a9cbea" stroke="#4c88e8" /><text x="10" y="15" textAnchor="middle" fontSize="13" fontWeight="700" fontFamily="Liberation Serif, serif">T</text></>],
    ['Freccia sottile', <><path d="M5 15L15 5" stroke="#000" strokeWidth="2" /><circle cx="4" cy="16" r="2.200" fill="#b8ccd4" stroke="#000" /><path d="M18 2v8l-8-8z" /></>],
    ['Freccia destra', <path d="M3 7h8V3l7 7-7 7v-4H3z" />],
    ['Freccia giù', <path d="M7 3h6v8h4l-7 7-7-7h4z" fill="#f01010" stroke="#900" />],
    ['Freccia su', <path d="M7 18h6v-8h4l-7-7-7 7h4z" fill="#28a828" stroke="#0a600a" />],
    ['Attenzione', <><path d="M10 1l10 17H0z" fill="#f8b030" stroke="#c07010" /><path d="M10 6v6M10 14v3" stroke="#7a3c08" strokeWidth="2.500" /></>],
    ['Conferma', <path d="M1 11l4-2 4 4 7-11h3l-2 6-8 12z" fill="#50d050" stroke="#1c8c1c" />],
    ['Elimina', <path d="M2 4l4-3 4 5 4-5 4 3-4 6 4 6-4 3-4-5-4 5-4-3 4-6z" fill="#f01818" stroke="#a00808" />],
];

const Sidebar = () => (
    <nav className="flex w-[31px] shrink-0 flex-col items-center border-r border-[#6f8b98] bg-[#9cbac6]">
        <button type="button" aria-label="Scorri su" className="flex h-[15px] w-full shrink-0 items-center justify-center border-b border-[#7f9cab]"><svg width="8" height="5"><path d="M0 5h8L4 0z" fill="#73909c" /></svg></button>
        {TOOLS.map(([name, art, active]) => (
            <button key={name} type="button" aria-label={name} className={`flex h-[26px] w-[26px] shrink-0 items-center justify-center rounded-[2px] border ${active ? 'border-[#6f8b98] bg-[#8fa5b0]' : 'border-transparent'}`}>
                <svg width="20" height="20" viewBox="0 0 20 20" overflow="visible">{art}</svg>
            </button>
        ))}
        <button type="button" aria-label="Scorri giù" className="flex h-[14px] w-full shrink-0 items-center justify-center border-y border-[#7f9cab] bg-[#b3d0db]"><svg width="8" height="5"><path d="M0 0h8L4 5z" /></svg></button>
        <button type="button" aria-label="Altro" className="flex w-full flex-1 items-center justify-center"><svg width="18" height="14"><g fill="#444455"><circle cx="3" cy="4" r="2" /><circle cx="9" cy="4" r="2" /><circle cx="15" cy="4" r="2" /></g><path d="M11 9h6l-3 4z" /></svg></button>
    </nav>
);

/* ---------- bottom toolbar ---------- */

const BottomBar = () => (
    <div className="flex h-[25px] shrink-0 items-stretch border-y border-[#6f8b98] bg-[#9cbac6]">
        <button type="button" aria-label="Disegna" className="flex w-[31px] items-center justify-center bg-[#8fa9b5]"><svg width="20" height="20" viewBox="0 0 20 20"><path d="M1 3l6 14L11 5" fill="none" stroke="#c02828" strokeWidth="1.500" /><path d="M2 18l6-12 4 8" fill="none" stroke="#208030" strokeWidth="1.500" /><path d="M9 13l7-11 3 2-7 11-4 2z" fill="#f8d860" stroke="#a07c18" /></svg></button>
        <button type="button" aria-label="Menu disegno" className="flex w-[14px] items-center justify-center"><Caret /></button>
        <button type="button" className="flex w-[78px] items-center gap-[5px] border-r border-[#9cb0ba] bg-[#f4f6f8] pl-[5px]">
            <svg width="19" height="22" viewBox="0 0 19 22" fill="none"><path d="M0 9q5-14 10-2t9 2" stroke="#20a030" strokeWidth="1.500" /><path d="M0 3q5 0 9 5t10-2" stroke="#e03030" strokeWidth="1.500" /><path d="M0 15h4v3h5v-2h4v-2h6v7H0z" fill="#20c020" /><path d="M0 19h19v2H0z" fill="#e02020" /></svg>
            Indicatori
        </button>
        <button type="button" aria-label="Menu indicatori" className="flex w-[14px] items-center justify-center bg-[#f4f6f8]"><Caret /></button>
        <button type="button" aria-label="Condividi" className="flex w-[22px] items-center justify-center bg-[#2e96dc]"><svg width="16" height="16" fill="#fff"><path d="M3 8l10-5M3 8l10 5" stroke="#fff" strokeWidth="2" /><circle cx="3" cy="8" r="3" /><circle cx="13" cy="3" r="2.500" /><circle cx="13" cy="13" r="2.500" /></svg></button>
        <button type="button" className="flex w-[83px] items-center gap-[6px] border-r border-[#7f9cab] bg-[#f4f6f8] pl-[2px]">
            <svg width="18" height="18" fill="none"><path d="M7 2H3v14h4" stroke="#28547c" strokeWidth="3.500" /><path d="M11 2h4v14h-4" stroke="#667078" strokeWidth="3" /></svg>
            Analizzare
        </button>
        <div className="flex items-center gap-[7px] px-[6px]">
            <button type="button" aria-label="Messaggi"><svg width="17" height="18"><path d="M1 0h8l3 3v11H1z" fill="#fff" stroke="#7890a8" /><rect x="3" y="6" width="13" height="9" rx="2" fill="#3868d0" /><path d="M5 18l1-4h4z" fill="#3868d0" /><path d="M5.500 10.500h9" stroke="#fff" strokeWidth="2" strokeDasharray="2 1" /></svg></button>
            <button type="button" aria-label="Lista"><svg width="17" height="18"><path d="M2 .5h13v17H2z" fill="#fff" stroke="#222" /><path d="M4 4h6M4 7h7M4 10h5M4 13h7" stroke="#222" /><path d="M9 1h6v6z" fill="#e02838" /><path d="M8 12l3 4h-6zM13 11v6" fill="#20a030" stroke="#20a030" /></svg></button>
            <button type="button" aria-label="Book ordini"><svg width="17" height="18"><g fill="#28c830" stroke="#0c7c10"><path d="M1 1h7v3H1zM3 5h5v3H3zM1 9h7v3H1zM4 13h4v3H4z" /></g><g fill="#f05050" stroke="#a01818"><path d="M9 2h4v3H9zM9 6h7v3H9zM9 10h5v3H9zM9 14h7v3H9z" /></g></svg></button>
            <button type="button" aria-label="Grafici"><svg width="18" height="18"><path d="M1 1h11v10H1zM6 7h11v10H6z" fill="#fff" stroke="#2450a0" /><path d="M1 2.500h11M6 8.500h11" stroke="#2450a0" strokeWidth="3" /><path d="M7 15l3-3 2 2 4-3" fill="none" stroke="#e03030" strokeWidth="1.500" /><path d="M2 8l3-2 2 1" fill="none" stroke="#20a030" strokeWidth="1.500" /></svg></button>
            <button type="button" aria-label="Configura"><svg width="17" height="18"><rect x="1" y="9" width="5" height="7" fill="#f05050" stroke="#801818" /><rect x="10" y="2" width="6" height="12" fill="#38c838" stroke="#0c5c10" /><path d="M3 14l6-6q-1-4 3-5v3l2 1 2-2q1 5-4 5l-6 6z" fill="#fff" stroke="#111" /></svg></button>
            <span className="text-[18px] leading-none text-[#44545e]">«</span>
        </div>
        <div className="my-[4px] flex flex-1 border-y border-[#6f8b98]">
            <button type="button" aria-label="Scorri a sinistra" className="flex w-[15px] items-center justify-center border-x border-[#6f8b98] bg-[#b3d0db]"><svg width="5" height="8"><path d="M5 0v8L0 4z" /></svg></button>
            <span className="flex-1" />
            <span className="w-[420px] border-x border-[#6f8b98] bg-gradient-to-b from-[#b8d6e2] to-[#93b2be]" />
        </div>
    </div>
);

/* ---------- notifications ---------- */

const ALERTS = [
    ['16:00:00', 'Vendita (Entrata)', 'META PLATFORMS INC. (5 minuti)', '172,68', '-115', false],
    ['16:00:00', 'Vendita (Entrata)', 'SHOPIFY (5 minuti)', '38,47', '-519', false],
    ['16:00:00', 'Vendita (Entrata)', 'TESLA INC. (5 minuti)', '829,45', '-24', false],
    ['15:30:00', 'Acquisto (Uscita)', 'SHOPIFY (5 minuti)', '39,40', '495', true],
];

const BellIcon = () => (
    <svg width="30" height="33" viewBox="0 0 30 33">
        <defs><linearGradient id="gold"><stop offset="0" stopColor="#ffc814" /><stop offset=".45" stopColor="#ffe850" /><stop offset="1" stopColor="#f0a410" /></linearGradient></defs>
        <path d="M14 0h2v3h-2zM14 27h3v5h-3z" fill="#e8a818" />
        <path d="M8 4q7-3 13 0 1 12 8 19 1 4-3 4-11 3-24 0-3-2 0-4 6-7 6-19z" fill="url(#gold)" stroke="#d09010" strokeWidth=".7" />
        <path d="M3 23q12 4 25 0" fill="none" stroke="#d89810" />
        <path d="M21 1h5v6h3l-5.500 6.500L18 7h3z" fill="#3a3a3e" />
        <path d="M5 31h4v-5h3L7 20l-5 6h3z" fill="#fff" stroke="#555" />
    </svg>
);

const Alert = ({ alert: [time, type, name, price, qty, buy] }) => (
    <article className="flex h-[98px] flex-col border border-[#67838f] bg-gradient-to-b from-[#b6d8e5] to-[#98b8c4] px-[10px] whitespace-nowrap shadow-[inset_0_1px_0_#c8e2ec]">
        <div className="flex h-[28px] items-center gap-[10px]">
            <span>{time}</span>
            <b>ProBacktest - Allarme scattato</b>
            <button type="button" aria-label="Impostazioni" className="ml-auto"><svg width="11" height="11" viewBox="0 0 11 11"><path d="M1 10l5-5" stroke="#70868f" strokeWidth="3" /><path d="M5 5q-1-4 3-5v3l1.500.5L11 3q0 5-5 4z" fill="#70868f" /></svg></button>
            <button type="button" aria-label="Chiudi" className="-mr-[3px] -ml-[3px]"><svg width="11" height="11" stroke="#70868f" strokeWidth="2"><path d="M1 1l9 9M10 1l-9 9" /></svg></button>
        </div>
        <div className="flex h-[42px] items-center gap-[16px] border-b border-[#6f909e] pb-[12px] pl-[6px] shadow-[0_1px_0_#c8e2ec]">
            <BellIcon />
            <b>upd_barindex_6c_20220711_15(2)</b>
            <span className="ml-auto pl-[9px]">Tipo: <b className={buy ? 'text-[#14801c]' : 'text-[#a80c1c]'}>{type}</b></span>
        </div>
        <div className="flex flex-1 items-center gap-[20px]">
            <span className="flex items-center gap-[5px]">
                <svg width="16" height="13" viewBox="0 0 16 13"><rect x="3.500" y="1.500" width="12" height="11" fill="#fff" stroke="#2458a8" /><path d="M3 3h13" stroke="#2458a8" strokeWidth="3" /><path d="M5 11l3-4 2 3 4-4" fill="none" stroke="#d03028" strokeWidth="1.300" /><path d="M4 0v8M0 4h8" stroke="#2458a8" strokeWidth="3.500" /><path d="M4 1v6M1 4h6" stroke="#fff" strokeWidth="2" /></svg>
                <b>{name}</b>
            </span>
            <span className="ml-auto">Prezzo: {price}</span>
            <span>Quantità: {qty}</span>
        </div>
    </article>
);

/* ---------- Windows taskbar ---------- */

const OfficeIcon = ({ letter, dark, base, light, round }) => (
    <svg width="36" height="36" viewBox="0 0 36 36">
        {round ? <circle cx="20" cy="18" r="16" fill={light} /> : <rect x="9" y="2" width="26" height="32" rx="2" fill={light} />}
        {round ? <path d="M20 18h16a16 16 0 0 1-32 0z" fill={base} /> : <><path d="M9 12h26v10H9z" fill={base} /><path d="M9 22h26v10q0 2-2 2H11q-2 0-2-2z" fill={dark} /></>}
        <rect x="0" y="9" width="19" height="19" rx="2" fill={dark} />
        <text x="9.500" y="24" textAnchor="middle" fontSize="14" fontWeight="700" fill="#fff" fontFamily="Open Sans, sans-serif">{letter}</text>
    </svg>
);

const Svg36 = ({ children }) => <svg width="36" height="36" viewBox="0 0 36 36">{children}</svg>;

const APPS = [
    ['Access', <Svg36><path d="M8 5v26q0 4 13 4t13-4V5z" fill="#8c1424" /><path d="M8 5v17q0 4 13 4t13-4V5z" fill="#c03048" /><ellipse cx="21" cy="5" rx="13" ry="4" fill="#e88090" /><rect y="9" width="18" height="19" rx="2" fill="#a81c30" /><text x="9" y="24" textAnchor="middle" fontSize="14" fontWeight="700" fill="#fff" fontFamily="Open Sans, sans-serif">A</text></Svg36>, 'line'],
    ['Pannello di controllo', <Svg36><rect x="2" y="7" width="31" height="22" rx="1" fill="#58b8e8" stroke="#a8e0f8" strokeWidth="2" /><circle cx="11" cy="16" r="6" fill="#e8f4fc" /><path d="M11 16V10a6 6 0 0 1 6 6z" fill="#f8a828" /><path d="M21 12h9M21 17h9M21 22h9M6 25h10" stroke="#fff" strokeWidth="2" /></Svg36>],
    ['PowerPoint', <OfficeIcon letter="P" dark="#c43e1c" base="#d35230" light="#ff8f6b" round />],
    ['Word', <OfficeIcon letter="W" dark="#185abd" base="#2b7cd3" light="#41a5ee" />],
    ['Outlook', <svg width="40" height="44" viewBox="0 0 40 44"><path d="M9 4h25v30H9z" fill="#1490df" /><path d="M17 6h9v9h-9z" fill="#28a8ea" /><path d="M26 6h9v9h-9z" fill="#50d9ff" /><path d="M9 15h9v9H9z" fill="#0364b8" /><rect x="1" y="12" width="18" height="18" rx="2" fill="#0f6cbd" /><text x="10" y="26" textAnchor="middle" fontSize="14" fontWeight="700" fill="#fff" fontFamily="Open Sans, sans-serif">O</text><rect x="17" y="26" width="22" height="16" fill="#f5c888" /><path d="M17 26l11 9 11-9" fill="none" stroke="#fff" strokeWidth="1.500" /></svg>, 'alert'],
    ['Excel', <OfficeIcon letter="X" dark="#107c41" base="#21a366" light="#33c481" />, 'line'],
    ['Strumento di cattura', <Svg36><ellipse cx="17" cy="14" rx="15" ry="7" transform="rotate(-15 17 14)" fill="#b8bcc0" /><ellipse cx="17" cy="10" rx="14" ry="8" transform="rotate(-15 17 10)" fill="#fff" stroke="#d83838" strokeWidth="1.500" /><path d="M15 4l5 18M26 6l-10 16" stroke="#90989e" strokeWidth="2" /><ellipse cx="20" cy="29" rx="3" ry="6" fill="none" stroke="#2080c8" strokeWidth="3" /><ellipse cx="27" cy="25" rx="3" ry="6" transform="rotate(-50 27 25)" fill="none" stroke="#2080c8" strokeWidth="3" /></Svg36>, 'active'],
    ['Chrome', <Svg36><circle cx="18" cy="18" r="16.500" fill="#fbc116" /><path d="M18 18L3.700 9.700A16.500 16.500 0 0 1 32.300 9.700L32 11H18z" fill="#e33b2e" /><path d="M18 18L3.700 9.700a16.500 16.500 0 0 0 12 24.600l8-12z" fill="#2ba24c" /><circle cx="18" cy="18" r="8" fill="#fff" /><circle cx="18" cy="18" r="6.300" fill="#2878e8" /></Svg36>, 'line'],
    ['Esplora file', <Svg36><path d="M2 5h11l3 3h17v22H2z" fill="#e8a818" /><path d="M2 10h32v21H2z" fill="#ffd766" /><path d="M8 32V20h20v12h-5v-6H13v6z" fill="#3c98dc" /></Svg36>, 'line'],
    ['Internet Explorer', <Svg36><path fillRule="evenodd" d="M19 5a14 14 0 1 0 13 20h-7q-5 5-10 0l-1-4h19Q33 5 19 5zm-5 11q6-8 11 0z" fill="#5cccf4" /><path d="M4 33Q-1 28 12 14T33 2q4 3-3 11" fill="none" stroke="#f4c01c" strokeWidth="2.500" /></Svg36>],
    ['Edge', <Svg36><circle cx="18" cy="18" r="17" fill="#1268b4" /><path d="M1 18A17 17 0 0 1 35 16q0 9-10 9 4-10-6-12T1 18z" fill="#35c0c8" /><path d="M22 2q13 4 13 14 0 9-10 9 3-6-1-10z" fill="#58d878" /><path d="M14 14q-4 16 14 16l4-3q-11 2-11-9-3-5-7-4z" fill="#0c4a94" /><path d="M19 17q-1 7 7 9h6q-4 2-8-1t-5-8z" fill="#2a3036" /></Svg36>],
    ['Notepad++', <Svg36><path d="M3 5l22 1 1 26-21 2z" fill="#f4f6ea" stroke="#888" /><path d="M4 21l21-4v15L5 34z" fill="#50d028" /><path d="M4 5h21" stroke="#333" strokeWidth="3" strokeDasharray="1 2" /><ellipse cx="14" cy="19" rx="7" ry="4" fill="#78d840" stroke="#205010" /><circle cx="15" cy="14" r="3" fill="#e8f8d0" stroke="#205010" /><path d="M33 3l-7 22" stroke="#d89818" strokeWidth="2" /></Svg36>],
    ['Database', <Svg36><path d="M8 5v24q0 3 12 3t12-3V5z" fill="#a83878" /><path d="M10 6v24M14 7v24" stroke="#e078b0" strokeWidth="2" /><ellipse cx="20" cy="5" rx="12" ry="4" fill="#e890c0" /><path d="M8 13q12 6 24 0M8 21q12 6 24 0" stroke="#601840" fill="none" /><circle cx="9" cy="25" r="7" fill="#c8ccd0" /><circle cx="9" cy="25" r="7.500" fill="none" stroke="#b0b4b8" strokeWidth="3" strokeDasharray="3 2.500" /><circle cx="9" cy="25" r="2.500" fill="#444" /></Svg36>, 'line'],
    ['Utilità', <Svg36><path d="M16 14l-3-9 4-3M20 17L26 4l4 4M24 22l4-10M25 24l8-8" fill="none" stroke="#d0d4d8" strokeWidth="2.500" /><path d="M4 10l5-5 20 25q0 5-7 4z" fill="#d83840" /><path d="M9 14l5-2M11 11l1 5" stroke="#fff" strokeWidth="1.500" /></Svg36>],
    ['Oracle', <Svg36><rect width="36" height="36" fill="#fa2c20" /><rect x="5" y="11" width="26" height="15" rx="7.500" fill="none" stroke="#fff" strokeWidth="4" /></Svg36>],
    ['ProRealTime', <Svg36><rect width="36" height="36" rx="4" fill="#e8e8e8" /><path d="M12 13v17M24 6v20" stroke="#333" strokeWidth="1.500" /><rect x="8" y="17" width="8" height="10" fill="#485058" stroke="#222" /><rect x="20" y="11" width="8" height="14" fill="#7ed321" stroke="#4c9c14" /></Svg36>],
    ['XMind', <Svg36><circle cx="18" cy="18" r="17" fill="#e01838" stroke="#f06878" /><path d="M11 8q4-1 7 6 4-7 8-6 4 4-3 10 7 6 3 10-4 1-8-6-3 7-7 6-4-4 3-10-7-6-3-10z" fill="#fff" /><path d="M26 9q-7 5-7 9t7 9" fill="none" stroke="#a01030" strokeWidth="2.500" /></Svg36>],
    ['Paint', <Svg36><path d="M16 8q15 0 14 11-1 14-16 14Q0 32 2 23q1-4 7-2 4 0 1-4-2-8 6-9z" fill="#c0dcf0" /><circle cx="8" cy="25" r="3" fill="#e03030" /><circle cx="20" cy="28" r="3" fill="#3080e0" /><circle cx="25" cy="19" r="3" fill="#f0c020" /><circle cx="17" cy="14" r="3" fill="#38b048" /><path d="M29 10L19 34" stroke="#e08030" strokeWidth="2.500" /><path d="M26 9l3-8 5 3-3 7z" fill="#c89468" /></Svg36>],
    ['Blocco note', <Svg36><path d="M11 4h21l-7 28-22-3z" fill="#78b8c8" /><path d="M11 4h21l-3 12-19 6z" fill="#b8e4f0" /><path d="M32 4l2 26-9 3z" fill="#e8e8e0" /><path d="M11 4h21" stroke="#445" strokeWidth="3" strokeDasharray="1 1.500" /></Svg36>, 'line'],
    ['Teams', <svg width="40" height="40" viewBox="0 0 40 40"><circle cx="21" cy="7" r="6" fill="#7b83eb" /><circle cx="32" cy="10" r="4" fill="#5059c9" /><path d="M13 14h18v14q-2 9-10 9t-8-9z" fill="#7b83eb" /><path d="M28 15h10v11q-2 6-8 5z" fill="#5059c9" /><rect y="9" width="19" height="19" rx="2" fill="#4b53bc" /><text x="9" y="24" textAnchor="middle" fontSize="14" fontWeight="700" fill="#fff" fontFamily="Open Sans, sans-serif">T</text><circle cx="29" cy="29" r="10.500" fill="#d01838" /><text x="29" y="35" textAnchor="middle" fontSize="17" fontWeight="700" fill="#fff" fontFamily="Open Sans, sans-serif">2</text></svg>, 'line'],
    ['Trading', <Svg36><path d="M11 13v16M23 6v22" stroke="#555" strokeWidth="1.500" /><rect x="7" y="17" width="8" height="9" fill="#484f54" stroke="#666" /><rect x="19" y="10" width="8" height="15" fill="#8ae61c" /></Svg36>, 'line'],
];

const Taskbar = () => (
    <footer className="flex h-[60px] shrink-0 bg-gradient-to-r from-[#1d2a2b] via-[#2b3136] to-[#2b3036] text-white" style={{ fontFamily: '"Open Sans", "Noto Sans", sans-serif' }}>
        <div className="flex w-[293px] shrink-0">
            <button type="button" aria-label="Start" className="flex w-[71px] items-center justify-center"><svg width="24" height="24" fill="#fff"><path d="M0 3.500L10.500 2v9.500H0zM11.500 1.800L24 0v11.500H11.500zM0 12.500h10.500V22L0 20.500zM11.500 12.500H24V24l-12.500-1.800z" /></svg></button>
            <button type="button" aria-label="Cerca" className="flex w-[72px] items-center justify-center"><svg width="26" height="26" fill="none" stroke="#fff" strokeWidth="1.600"><circle cx="16" cy="9.500" r="8" /><path d="M10.500 15.500L1 25" /></svg></button>
            <button type="button" aria-label="Cortana" className="flex w-[72px] items-center justify-center"><svg width="26" height="26"><circle cx="13" cy="13" r="10" fill="none" stroke="#fff" strokeWidth="3.500" /></svg></button>
            <button type="button" aria-label="Visualizzazione attività" className="flex w-[72px] items-center justify-center"><svg width="26" height="24" fill="none" stroke="#fff" strokeWidth="1.500"><path d="M2 0v4h15V0M2 24v-4h15v4M2 7h15v10H2zM23 0v5M23 11v13" /><path d="M21.500 7.500h3" strokeWidth="3" /></svg></button>
        </div>
        <div className="flex flex-1">
            {APPS.map(([name, icon, state]) => (
                <button key={name} type="button" aria-label={name} className="flex flex-1 flex-col items-center">
                    <span className={`flex w-[56px] flex-1 items-center justify-center ${state === 'alert' ? 'bg-[#a9642c]' : ''} ${state === 'active' ? 'mt-[8px] bg-[#53595d] pb-[8px]' : ''}`}>{icon}</span>
                    <span className={`h-[3px] ${state === 'alert' ? 'w-[56px] bg-[#f07818]' : ''} ${state === 'active' ? 'w-[56px] bg-[#76b4e4]' : ''} ${state === 'line' ? 'w-[45px] bg-[#76b4e4]' : ''}`} />
                </button>
            ))}
        </div>
        <div className="flex w-[394px] shrink-0 items-center">
            <button type="button" aria-label="Icone nascoste" className="ml-[11px]"><svg width="18" height="12" fill="none" stroke="#fff" strokeWidth="1.500"><path d="M1 10l8-8 8 8" /></svg></button>
            <button type="button" aria-label="Volume" className="ml-[16px]"><svg width="24" height="20" fill="none" stroke="#fff" strokeWidth="1.300"><path d="M1 7h4l5-5v16l-5-5H1zM13 7q2 3 0 6" /><path d="M16 5q4 5 0 10M19 3q6 7 0 14" stroke="#9a9ea2" /></svg></button>
            <button type="button" aria-label="Sincronizza" className="ml-[10px]"><svg width="24" height="24"><path d="M14 6Q11 2 7 4T6 10q6 1 6 5t-9 4" fill="none" stroke="#fff" strokeWidth="4" /><path d="M16 22V12h-3l5-6 5 6h-3v10z" fill="#28a048" stroke="#0c4c1c" /></svg></button>
            <button type="button" aria-label="Rete" className="ml-[12px]"><svg width="25" height="20" fill="none" stroke="#fff" strokeWidth="1.300"><path d="M7 2h17v13H6V8M15 15v4M9 19h12M1 1h6v5H1zM4 6v4M2 1v3" /></svg></button>
            <span className="ml-[20px] text-[17px]">ITA</span>
            <time className="ml-[22px] w-[100px] text-center text-[17px] leading-[28px]">16:06<br />22/07/2022</time>
            <button type="button" aria-label="Notifiche" className="ml-[24px]">
                <svg width="42" height="40"><path d="M1 2h24v19H13l-4 4v-4H1z" fill="#fff" /><path d="M5 8h15M5 12h15M5 16h12" stroke="#33383c" /><circle cx="24" cy="27" r="14" fill="#33383c" stroke="#8a8e92" /><text x="24" y="33" textAnchor="middle" fontSize="16" fontWeight="700" fill="#fff">29</text></svg>
            </button>
            <span className="mr-[7px] ml-auto h-full w-px bg-[#70757a]" />
        </div>
    </footer>
);

const App = () => (
    <div className="relative flex h-screen min-h-[1080px] flex-col overflow-hidden text-[11px] leading-[14px] text-black" style={{ fontFamily: '"Liberation Sans", Arial, sans-serif' }}>
        <TitleBar />
        <div className="flex min-h-0 flex-1">
            <Sidebar />
            <main className="flex min-w-0 flex-1 flex-col">
                <AccountBar />
                <EquityPane />
                <PositionsPane />
                <PricePane />
                <SmallPane label="updown15" top={820} height={47} className="h-[48px]">
                    <polygon points={`20,824.500 ${bx(6)},824.500 ${bx(7)},865.500 ${bx(8)},865.500 ${bx(9)},824.500 ${bx(12)},824.500 ${bx(13)},865.500 1880,865.500 20,865.500`} {...LOWER_FILL} />
                </SmallPane>
                <SmallPane label="BigBodyCount" top={868} height={58} className="h-[59px]">
                    <polygon points={`${bx(13)},898.500 ${bx(14)},873.500 ${bx(15)},873.500 ${bx(16)},898.500`} {...LOWER_FILL} />
                    <polygon points={`${bx(57)},898.500 ${bx(58)},923 ${bx(59)},898.500`} {...LOWER_FILL} />
                    <polygon points={`${bx(81)},898.500 ${bx(82)},923 ${bx(83)},898.500`} {...LOWER_FILL} />
                    <path d="M31 898.500H1873" stroke="#000" />
                </SmallPane>
                <SmallPane label="BigBodyCountstreak" top={927} height={49} className="h-[50px]">
                    <polygon points={`20,948.500 ${bx(13)},948.500 ${bx(15)},931.500 ${bx(57)},931.500 ${bx(58)},965.500 ${bx(81)},965.500 ${bx(82)},974.500 1880,974.500 1880,990 20,990`} {...LOWER_FILL} />
                </SmallPane>
                <TimeAxis />
            </main>
        </div>
        <BottomBar />
        <Taskbar />
        <aside className="absolute right-0 bottom-[60px] flex flex-col items-end">
            {ALERTS.map((alert) => <Alert key={alert[2] + alert[0]} alert={alert} />)}
        </aside>
    </div>
);

export default App;
